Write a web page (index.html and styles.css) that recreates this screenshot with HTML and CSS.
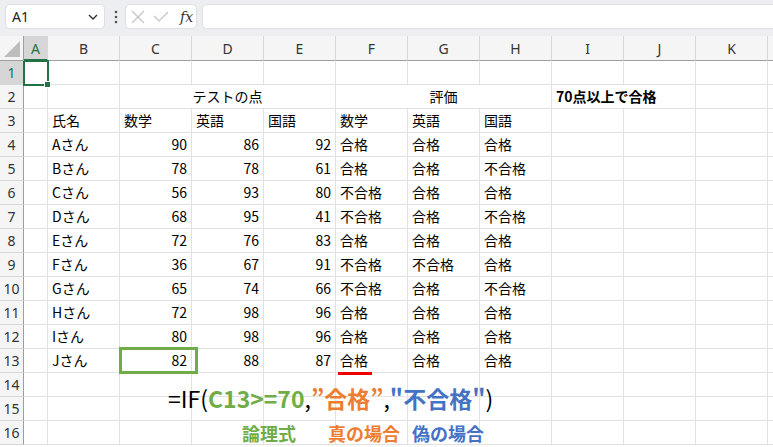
FILE: index.html
```html
<!DOCTYPE html>
<html lang="ja">
<head>
    <meta charset="UTF-8">
    <title>IF関数</title>
    <link rel="stylesheet" href="styles.css">
</head>
<body>
    <div class="toolbar">
        <div class="name-box">
            <span>A1</span>
            <svg width="10" height="6" viewBox="0 0 10 6"><path d="M1 1l4 4 4-4" fill="none" stroke="#333" stroke-width="1.4"/></svg>
        </div>
        <svg class="dots" width="4" height="14" viewBox="0 0 4 14"><circle cx="2" cy="2" r="1.3" fill="#555"/><circle cx="2" cy="7" r="1.3" fill="#555"/><circle cx="2" cy="12" r="1.3" fill="#555"/></svg>
        <div class="fx-box">
            <svg width="14" height="14" viewBox="0 0 14 14"><path d="M1 1l12 12M13 1L1 13" stroke="#c4c4c4" stroke-width="1.2"/></svg>
            <svg width="16" height="12" viewBox="0 0 16 12"><path d="M1 5l5 5 9-9" fill="none" stroke="#c4c4c4" stroke-width="1.2"/></svg>
            <span class="fx">fx</span>
        </div>
        <div class="formula-input"></div>
    </div>

    <div class="sheet" id="sheet">
        <div class="formula">=IF(<b class="green">C13&gt;=70</b>,<b class="orange">”合格”</b>,<b class="blue">"不合格"</b>)</div>
        <div class="labels">
            <b class="green">論理式</b>
            <b class="orange">真の場合</b>
            <b class="blue">偽の場合</b>
        </div>
        <div class="sel-box"></div>
        <div class="check-box"></div>
        <div class="underline"></div>
    </div>

    <script>
        const letters = ["A", "B", "C", "D", "E", "F", "G", "H", "I", "J", "K", ""];
        const data = {
            3: ["", "氏名", "数学", "英語", "国語", "数学", "英語", "国語"],
            4: ["", "Aさん", 90, 86, 92, "合格", "合格", "合格"],
            5: ["", "Bさん", 78, 78, 61, "合格", "合格", "不合格"],
            6: ["", "Cさん", 56, 93, 80, "不合格", "合格", "合格"],
            7: ["", "Dさん", 68, 95, 41, "不合格", "合格", "不合格"],
            8: ["", "Eさん", 72, 76, 83, "合格", "合格", "合格"],
            9: ["", "Fさん", 36, 67, 91, "不合格", "不合格", "合格"],
            10: ["", "Gさん", 65, 74, 66, "不合格", "合格", "不合格"],
            11: ["", "Hさん", 72, 98, 96, "合格", "合格", "合格"],
            12: ["", "Iさん", 80, 98, 96, "合格", "合格", "合格"],
            13: ["", "Jさん", 82, 88, 87, "合格", "合格", "合格"]
        };

        const sheet = document.getElementById("sheet");
        const frag = document.createDocumentFragment();

        function cell(cls, text, span) {
            const el = document.createElement("div");
            el.className = cls;
            if (text !== undefined && text !== "") el.textContent = text;
            if (span) el.style.gridColumn = "span " + span;
            frag.appendChild(el);
            return el;
        }

        // column headers
        cell("corner");
        letters.forEach((l, i) => cell(i === 0 ? "hd active" : "hd", l));

        for (let r = 1; r <= 16; r++) {
            cell(r === 1 ? "rh active" : "rh", r);
            if (r === 2) {
                cell("c");
                cell("c");
                cell("c center", "テストの点", 3);
                cell("c center", "評価", 3);
                cell("c bold", "70点以上で合格", 2);
                cell("c");
                cell("c");
                continue;
            }
            const row = data[r] || [];
            letters.forEach((l, i) => {
                const v = row[i];
                cell(typeof v === "number" ? "c num" : "c", v);
            });
        }
        sheet.appendChild(frag);
    </script>
</body>
</html>
```

FILE: styles.css
```css
body {
    margin: 0;
    width: 773px;
    height: 447px;
    overflow: hidden;
    background: #fff;
    font-family: "Noto Sans CJK JP", "Noto Sans", sans-serif;
    color: #000;
}

.toolbar {
    height: 36px;
    box-sizing: border-box;
    background: #eceef1;
    display: flex;
    align-items: flex-start;
    padding: 4px 0 0 5px;
}

.name-box {
    width: 100px;
    height: 25px;
    box-sizing: border-box;
    background: #fff;
    border: 1px solid #e0e0e0;
    border-radius: 5px;
    display: flex;
    align-items: center;
    justify-content: space-between;
    padding: 0 6px;
    font-family: "Noto Sans", sans-serif;
    font-size: 14px;
    color: #222;
}

.dots {
    margin: 6px 7px 0 9px;
}

.fx-box {
    width: 72px;
    height: 25px;
    box-sizing: border-box;
    background: #fff;
    border: 1px solid #e0e0e0;
    border-radius: 5px;
    display: flex;
    align-items: center;
    gap: 8px;
    padding-left: 5px;
}

.fx {
    font-family: "DejaVu Serif", serif;
    font-style: italic;
    font-size: 14px;
    color: #333;
    margin-left: 3px;
}

.formula-input {
    flex: 1;
    height: 25px;
    margin-left: 5px;
    background: #fff;
    border: 1px solid #e0e0e0;
    border-right: none;
    border-radius: 5px 0 0 5px;
    box-sizing: border-box;
}

.sheet {
    position: relative;
    display: grid;
    grid-template-columns: 24px 24px repeat(11, 72px);
    grid-template-rows: 25px;
    grid-auto-rows: 24px;
    font-size: 14px;
}

.corner,
.hd,
.rh {
    background: #f5f5f5;
    box-sizing: border-box;
    font-family: "Noto Sans", sans-serif;
    font-size: 14px;
    color: #333;
    display: flex;
    align-items: center;
    justify-content: center;
}

.corner {
    border-right: 1px solid #9e9e9e;
    border-bottom: 1px solid #9e9e9e;
    position: relative;
}

.corner::after {
    content: "";
    position: absolute;
    right: 3px;
    bottom: 3px;
    border-left: 16px solid transparent;
    border-bottom: 16px solid #bdbdbd;
}

.hd {
    border-right: 1px solid #d8d8d8;
    border-bottom: 1px solid #9e9e9e;
    padding-top: 1px;
}

.rh {
    border-right: 1px solid #9e9e9e;
    border-bottom: 1px solid #d8d8d8;
}

.hd.active,
.rh.active {
    background: #d6d6d6;
    color: #217346;
}

.hd.active {
    border-bottom: 2px solid #217346;
}

.c {
    box-sizing: border-box;
    border-right: 1px solid #e1e1e1;
    border-bottom: 1px solid #e1e1e1;
    padding: 0 4px;
    line-height: 23px;
    white-space: nowrap;
}

.num {
    text-align: right;
}

.center {
    text-align: center;
}

.bold {
    font-weight: bold;
}

.green { color: #70ad47; }
.orange { color: #ed7d31; }
.blue { color: #4472c4; }

.formula {
    position: absolute;
    left: 168px;
    top: 347px;
    font-size: 23px;
    line-height: 30px;
    white-space: nowrap;
}

.labels {
    position: absolute;
    left: 242px;
    top: 385px;
    font-size: 18px;
    line-height: 24px;
    white-space: nowrap;
}

.labels .orange {
    margin-left: 28px;
}

.labels .blue {
    margin-left: 8px;
}

.sel-box {
    position: absolute;
    left: 23px;
    top: 24px;
    width: 26px;
    height: 26px;
    box-sizing: border-box;
    border: 2px solid #217346;
}

.sel-box::after {
    content: "";
    position: absolute;
    right: -4px;
    bottom: -4px;
    width: 5px;
    height: 5px;
    background: #217346;
    border: 1px solid #fff;
}

.check-box {
    position: absolute;
    left: 119px;
    top: 311px;
    width: 79px;
    height: 27px;
    box-sizing: border-box;
    border: 3px solid #70ad47;
}

.underline {
    position: absolute;
    left: 338px;
    top: 336px;
    width: 34px;
    height: 3px;
    background: #e00;
}
```
